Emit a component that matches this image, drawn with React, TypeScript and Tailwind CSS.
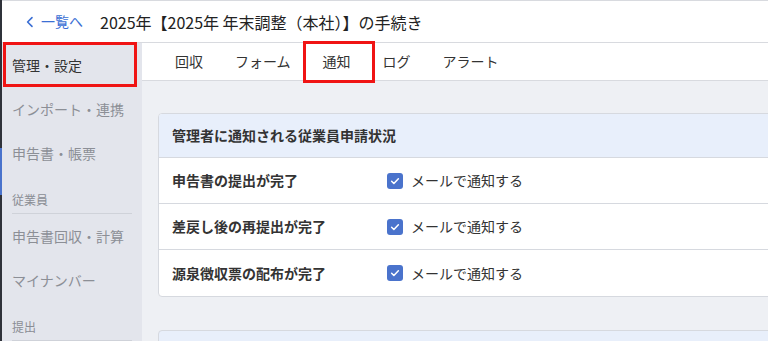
import React from 'react';

const font = { fontFamily: '"Noto Sans CJK JP", "Noto Sans", sans-serif' };

const sideItems: { label: string; type: 'item' | 'section'; active?: boolean }[] = [
  { label: '管理・設定', type: 'item', active: true },
  { label: 'インポート・連携', type: 'item' },
  { label: '申告書・帳票', type: 'item' },
  { label: '従業員', type: 'section' },
  { label: '申告書回収・計算', type: 'item' },
  { label: 'マイナンバー', type: 'item' },
  { label: '提出', type: 'section' },
];

const tabs = ['回収', 'フォーム', '通知', 'ログ', 'アラート'];

const rows = ['申告書の提出が完了', '差戻し後の再提出が完了', '源泉徴収票の配布が完了'];

const CheckIcon = () => (
  <span className="flex h-4 w-4 items-center justify-center rounded-[3px] bg-[#4a73cc]">
    <svg viewBox="0 0 16 16" className="h-3 w-3" fill="none">
      <path d="M3.5 8.3l3 3 6-6.3" stroke="#fff" strokeWidth="2" strokeLinecap="round" strokeLinejoin="round" />
    </svg>
  </span>
);

const App: React.FC = () => {
  return (
    <div className="flex h-[341px] w-[768px] overflow-hidden bg-[#eef0f4] text-[#333]" style={font}>
      {/* left edge strip */}
      <div className="flex w-[2px] shrink-0 flex-col bg-[#2f323a]">
        <div className="h-[148px]" />
        <div className="h-[47px] bg-[#4a73cc]" />
      </div>

      <div className="flex min-w-0 flex-1 flex-col">
        {/* header */}
        <div className="flex h-[43px] shrink-0 items-center border-y border-[#d8dadf] bg-white pl-[24px]">
          <a className="flex items-center gap-[7px] text-[14px] text-[#3b6fd4]">
            <svg viewBox="0 0 10 14" className="h-[12px] w-[8px]" fill="none">
              <path d="M7.5 1.5L2 7l5.5 5.5" stroke="#3b6fd4" strokeWidth="2" strokeLinecap="round" strokeLinejoin="round" />
            </svg>
            一覧へ
          </a>
          <h1 className="ml-[17px] text-[16px] text-[#222]">2025年【2025年 年末調整（本社）】の手続き</h1>
        </div>

        <div className="flex min-h-0 flex-1">
          {/* sidebar */}
          <div className="w-[140px] shrink-0 bg-[#e3e5ec]">
            {sideItems.map((item) =>
              item.type === 'section' ? (
                <div key={item.label} className="mx-[10px] h-[39px] border-b border-[#cfd2d9] pt-[16px] text-[12px] leading-[18px] text-[#8a8d94]">
                  {item.label}
                </div>
              ) : (
                <div
                  key={item.label}
                  className={`relative flex h-[44px] items-center px-[10px] text-[14px] ${
                    item.active ? 'text-[#333]' : 'text-[#8c8f96]'
                  }`}
                >
                  {item.label}
                  {item.active && (
                    <span className="absolute -top-[1px] bottom-0 left-[1px] right-[5px] border-[3px] border-[#f01414]" />
                  )}
                </div>
              )
            )}
          </div>

          {/* main */}
          <div className="flex min-w-0 flex-1 flex-col">
            <div className="flex h-[38px] shrink-0 items-stretch border-b border-[#d8dadf] bg-white pl-[17px]">
              {tabs.map((t) => (
                <div key={t} className="relative flex items-center px-[16px] text-[14px] text-[#333]">
                  {t}
                  {t === '通知' && (
                    <span className="absolute -bottom-[3px] -left-[4px] -right-[8px] -top-[2px] border-[3px] border-[#f01414]" />
                  )}
                </div>
              ))}
            </div>

            <div className="flex flex-col gap-[33px] pl-[16px] pt-[32px]">
              <div className="w-[700px] overflow-hidden rounded-[4px] border border-[#d6d9df] bg-white">
                <div className="flex h-[44px] items-center border-b border-[#d6d9df] bg-[#e8effb] px-[13px] text-[14px] font-bold text-[#333]">
                  管理者に通知される従業員申請状況
                </div>
                {rows.map((r, i) => (
                  <div
                    key={r}
                    className={`flex h-[46px] items-center px-[13px] ${i < rows.length - 1 ? 'border-b border-[#d6d9df]' : ''}`}
                  >
                    <div className="w-[215px] text-[14px] font-bold text-[#333]">{r}</div>
                    <label className="flex items-center gap-[8px] text-[14px] text-[#333]">
                      <CheckIcon />
                      メールで通知する
                    </label>
                  </div>
                ))}
              </div>

              <div className="h-[44px] w-[700px] rounded-t-[4px] border border-[#d6d9df] bg-[#e8effb]" />
            </div>
          </div>
        </div>
      </div>
    </div>
  );
};

export default App;
